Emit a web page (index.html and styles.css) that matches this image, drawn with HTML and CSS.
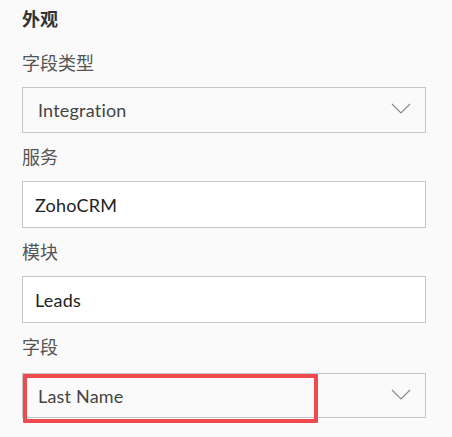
FILE: index.html
```html
<!DOCTYPE html>
<html lang="zh">
<head>
<meta charset="utf-8">
<link rel="stylesheet" href="styles.css">
</head>
<body>
<div class="panel">
  <h2 class="heading">外观</h2>
  <div class="label label-first">字段类型</div>
  <div class="select">
    <span class="value">Integration</span>
    <svg class="chev" width="20" height="11" viewBox="0 0 20 11"><path d="M1 1 L10 10 L19 1" fill="none" stroke="#8a8a8a" stroke-width="1.2"/></svg>
  </div>
  <div class="label">服务</div>
  <div class="input"><span class="value dark">ZohoCRM</span></div>
  <div class="label">模块</div>
  <div class="input"><span class="value dark">Leads</span></div>
  <div class="label">字段</div>
  <div class="select last">
    <span class="value">Last Name</span>
    <svg class="chev" width="20" height="11" viewBox="0 0 20 11"><path d="M1 1 L10 10 L19 1" fill="none" stroke="#8a8a8a" stroke-width="1.2"/></svg>
    <div class="highlight"></div>
  </div>
</div>
</body>
</html>
```
FILE: styles.css
```css
html, body {
  margin: 0;
  padding: 0;
  background: #fafafa;
}
body {
  font-family: Lato, "Noto Sans CJK SC", sans-serif;
}
.panel {
  padding: 7px 26px 20px 22px;
  width: 404px;
}
.heading {
  margin: 0;
  font-size: 18px;
  line-height: 24px;
  font-weight: 700;
  color: #333;
}
.label {
  font-size: 18px;
  line-height: 24px;
  color: #555;
  margin: 12px 0 12px;
}
.label-first {
  margin-top: 20px;
}
.select, .input {
  box-sizing: border-box;
  border: 1px solid #c6c6c6;
  display: flex;
  align-items: center;
  position: relative;
}
.select {
  height: 46px;
  background: #fafafa;
  padding: 0 14px 0 15px;
  justify-content: space-between;
}
.input {
  height: 47px;
  background: #fff;
  padding: 0 12px;
}
.select.last {
  height: 45px;
  margin-top: 14px;
}
.value {
  font-size: 18px;
  letter-spacing: 0.2px;
  color: #444;
}
.value.dark {
  color: #222;
}
.chev {
  display: block;
  margin-top: -3px;
}
.highlight {
  position: absolute;
  left: 0;
  top: 0;
  width: 295px;
  height: 49px;
  box-sizing: border-box;
  border: 4px solid #ee4a4f;
  border-radius: 1px;
}
```
